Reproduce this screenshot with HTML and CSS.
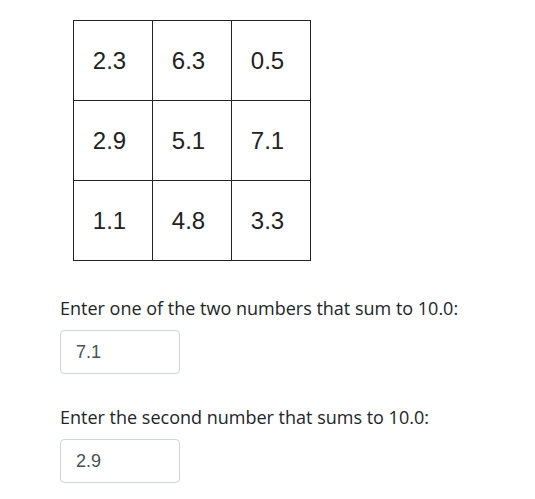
FILE: index.html
```html
<!DOCTYPE html>
<html>
<head>
<meta charset="utf-8">
<link rel="stylesheet" href="styles.css">
</head>
<body>
<div class="page">
  <table class="grid">
    <tr><td>2.3</td><td>6.3</td><td>0.5</td></tr>
    <tr><td>2.9</td><td>5.1</td><td>7.1</td></tr>
    <tr><td>1.1</td><td>4.8</td><td>3.3</td></tr>
  </table>
  <div class="field first">
    <label class="label">Enter one of the two numbers that sum to 10.0:</label>
    <div class="input">7.1</div>
  </div>
  <div class="field second">
    <label class="label">Enter the second number that sums to 10.0:</label>
    <div class="input">2.9</div>
  </div>
</div>
</body>
</html>
```

FILE: styles.css
```css
html, body {
  margin: 0;
  padding: 0;
  background: #ffffff;
}
.page {
  padding: 20px 0 0 60px;
}
.grid {
  border-collapse: collapse;
  margin-left: 13px;
}
.grid td {
  width: 71px;
  height: 79px;
  padding: 0 7px 0 0;
  border: 1px solid #222222;
  text-align: center;
  vertical-align: middle;
  font-family: "Liberation Sans", Arial, sans-serif;
  font-size: 24px;
  color: #222222;
}
.field {
  display: flex;
  flex-direction: column;
  align-items: flex-start;
}
.first {
  margin-top: 34px;
}
.second {
  margin-top: 30px;
}
.label {
  font-family: "Open Sans", sans-serif;
  font-size: 18px;
  line-height: 27px;
  color: #212529;
  margin-bottom: 8px;
}
.input {
  box-sizing: border-box;
  width: 120px;
  height: 44px;
  border: 1px solid #ced4da;
  border-radius: 4px;
  padding: 0 15px;
  display: flex;
  align-items: center;
  font-family: "Liberation Sans", Arial, sans-serif;
  font-size: 18px;
  color: #495057;
}
```
